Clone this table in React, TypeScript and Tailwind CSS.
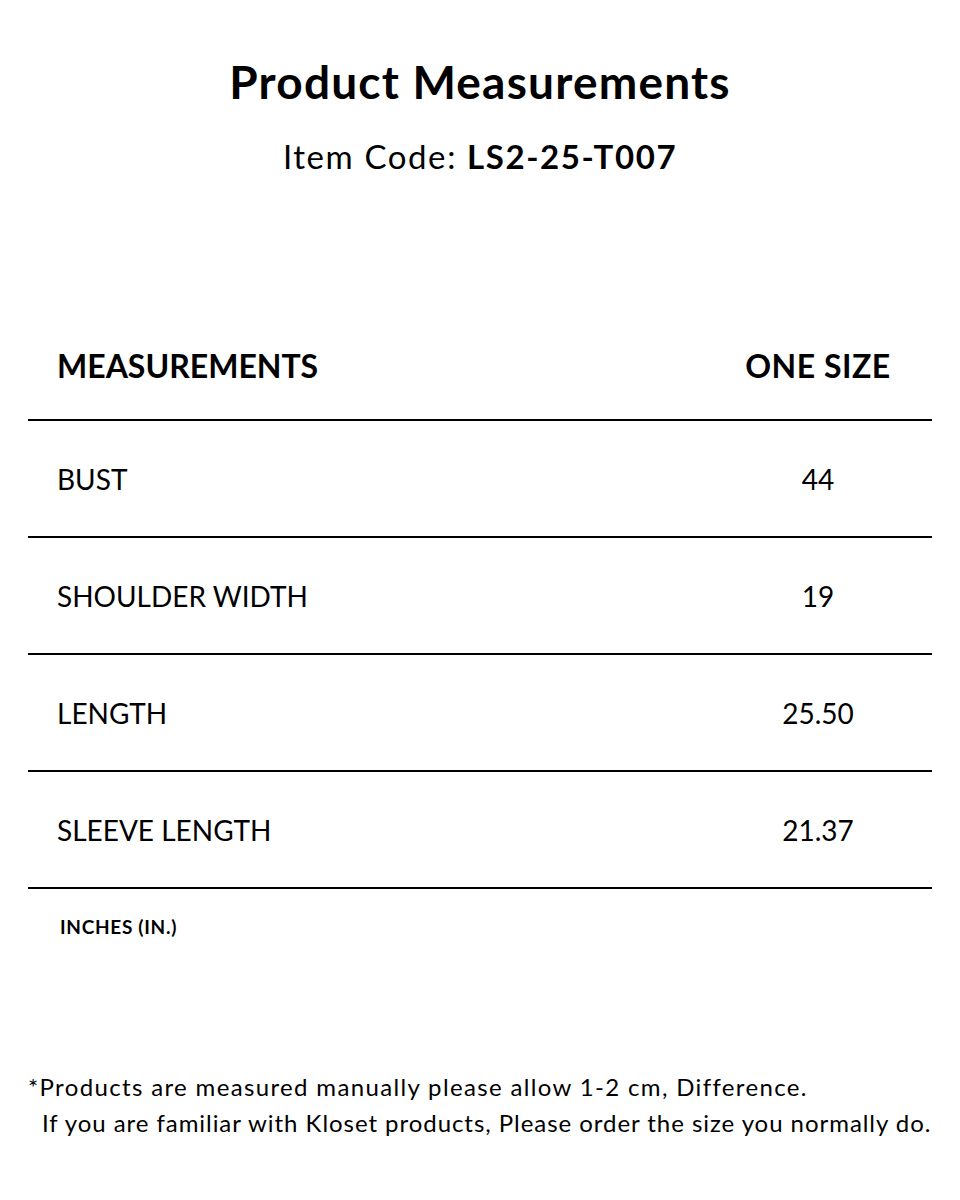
const rows = [
  { label: "BUST", value: "44" },
  { label: "SHOULDER WIDTH", value: "19" },
  { label: "LENGTH", value: "25.50" },
  { label: "SLEEVE LENGTH", value: "21.37" },
];

export default function App() {
  return (
    <div
      className="h-[1200px] w-[960px] bg-white text-black"
      style={{ fontFamily: "Lato, 'Open Sans', sans-serif" }}
    >
      <div className="pt-[54px] text-center">
        <h1 className="text-[46px] font-bold leading-[56px] tracking-[1.2px]">
          Product Measurements
        </h1>
        <p className="mt-[26px] text-[33px] leading-[40px] tracking-[1.6px]">
          Item Code: <span className="font-bold">LS2-25-T007</span>
        </p>
      </div>

      <div className="mx-[28px] mt-[151px]">
        <div className="flex h-[94px] items-center border-b-2 border-black pb-[14px]">
          <div className="flex-1 pl-[29px] text-[32px] font-bold">
            MEASUREMENTS
          </div>
          <div className="w-[228px] text-center text-[32px] font-bold tracking-[0.5px]">
            ONE SIZE
          </div>
        </div>

        {rows.map((row) => (
          <div
            key={row.label}
            className="flex h-[117px] items-center border-b-2 border-black"
          >
            <div className="flex-1 pl-[29px] text-[28px]">{row.label}</div>
            <div className="w-[228px] text-center text-[28px]">{row.value}</div>
          </div>
        ))}

        <div className="pl-[32px] pt-[24px] text-[19px] font-bold tracking-[0.7px]">
          INCHES (IN.)
        </div>
      </div>

      <div className="mt-[127px] text-[24px] leading-[36px]">
        <p className="pl-[28px] tracking-[1.35px]">
          *Products are measured manually please allow 1-2 cm, Difference.
        </p>
        <p className="pl-[42px] tracking-[0.95px]">
          If you are familiar with Kloset products, Please order the size you
          normally do.
        </p>
      </div>
    </div>
  );
}
